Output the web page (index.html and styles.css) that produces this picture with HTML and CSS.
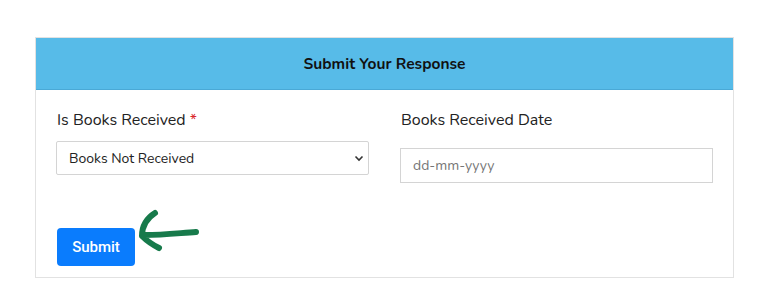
FILE: index.html
```html
<!DOCTYPE html>
<html>
<head>
<meta charset="utf-8">
<link rel="stylesheet" href="styles.css">
</head>
<body>
<div class="card">
  <div class="card-header">Submit Your Response</div>
  <div class="card-body">
    <div class="row">
      <div class="field">
        <label class="label">Is Books Received <span class="req">*</span></label>
        <div class="select-wrap">
          <select class="select">
            <option>Books Not Received</option>
          </select>
          <svg class="chev" width="10" height="7" viewBox="0 0 10 7"><path d="M1.5 1.5 L5 5 L8.5 1.5" fill="none" stroke="#333" stroke-width="1.6"/></svg>
        </div>
      </div>
      <div class="field">
        <label class="label">Books Received Date</label>
        <div class="input date-input">dd-mm-yyyy</div>
      </div>
    </div>
    <div class="actions">
      <button class="btn">Submit</button>
      <svg class="arrow" width="70" height="50" viewBox="0 0 70 50"><path d="M20 5 C12 10 7 18 7 28 C 12 33 18 37 24 40 M10 27 C 28 27 45 25 61 24" fill="none" stroke="#177a4b" stroke-width="6" stroke-linecap="round" stroke-linejoin="round"/></svg>
    </div>
  </div>
</div>
</body>
</html>
```

FILE: styles.css
```css
html, body {
  margin: 0;
  padding: 0;
  background: #fff;
}
body {
  padding-top: 37px;
  font-family: "Nunito", "Lato", "Open Sans", sans-serif;
  color: #222;
}
.card {
  margin-left: 35px;
  width: 699px;
  border: 1px solid #e2e2e2;
  box-sizing: border-box;
  height: 241px;
}
.card-header {
  background: #57bbe8;
  height: 52px;
  display: flex;
  align-items: center;
  justify-content: center;
  font-weight: 700;
  font-size: 15.5px;
  color: #111;
  border-bottom: 1px solid #4aa9d6;
  box-sizing: border-box;
}
.card-body {
  padding: 18px 20px 0 20px;
}
.row {
  display: grid;
  grid-template-columns: 313px 313px;
  column-gap: 31px;
}
.field {
  display: flex;
  flex-direction: column;
}
.label {
  font-size: 16px;
  line-height: 24px;
  color: #222;
  padding-left: 1px;
  margin-bottom: 9px;
}
.req {
  color: #d9262a;
}
.select-wrap {
  position: relative;
  width: 313px;
  height: 34px;
}
.select {
  appearance: none;
  -webkit-appearance: none;
  width: 313px;
  height: 34px;
  border: 1px solid #d4d4d4;
  border-radius: 2px;
  background: #fff;
  padding: 0 12px;
  font-family: "Nunito", "Lato", "Open Sans", sans-serif;
  font-size: 14px;
  color: #222;
  box-sizing: border-box;
}
.chev {
  position: absolute;
  right: 5px;
  top: 14px;
}
.input {
  width: 313px;
  height: 35px;
  border: 1px solid #d4d4d4;
  box-sizing: border-box;
  display: flex;
  align-items: center;
  padding-left: 12px;
  font-size: 14px;
  color: #757575;
  margin-top: 7px;
}
.actions {
  position: relative;
  margin-top: 45px;
  display: flex;
}
.btn {
  width: 78px;
  height: 38px;
  background: #0a7cfd;
  color: #fff;
  border: none;
  border-radius: 4px;
  font-family: Roboto, "Liberation Sans", Arial, sans-serif;
  font-size: 15px;
  font-weight: 500;
  margin-left: 1px;
}
.arrow {
  position: absolute;
  left: 79px;
  top: -20px;
}
```
